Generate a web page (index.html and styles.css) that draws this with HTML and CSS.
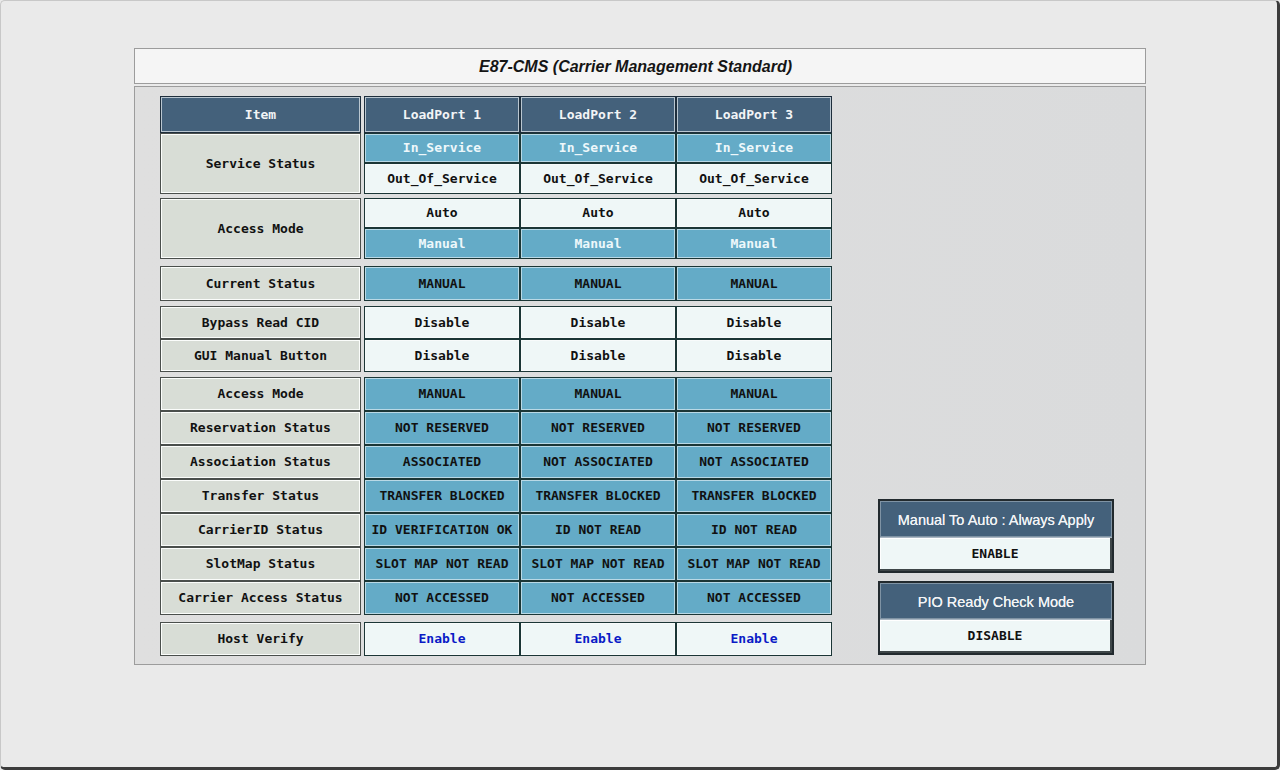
FILE: index.html
```html
<!DOCTYPE html>
<html>
<head>
<meta charset="utf-8">
<link rel="stylesheet" href="styles.css">
</head>
<body>
<div class="window">
  <div class="title">E87-CMS (Carrier Management Standard)</div>
  <div class="panel">
    <div class="table">
      <div class="grp grp-head">
        <div class="cell head item">Item</div>
        <div class="cell head">LoadPort 1</div>
        <div class="cell head">LoadPort 2</div>
        <div class="cell head">LoadPort 3</div>
      </div>
      <div class="grp grp-two g-service">
        <div class="cell label item span2">Service Status</div>
        <div class="cell blue sel">In_Service</div>
        <div class="cell blue sel">In_Service</div>
        <div class="cell blue sel">In_Service</div>
        <div class="cell light">Out_Of_Service</div>
        <div class="cell light">Out_Of_Service</div>
        <div class="cell light">Out_Of_Service</div>
      </div>
      <div class="grp grp-two g-access">
        <div class="cell label item span2">Access Mode</div>
        <div class="cell light">Auto</div>
        <div class="cell light">Auto</div>
        <div class="cell light">Auto</div>
        <div class="cell blue sel">Manual</div>
        <div class="cell blue sel">Manual</div>
        <div class="cell blue sel">Manual</div>
      </div>
      <div class="grp g-current">
        <div class="cell label item">Current Status</div>
        <div class="cell blue">MANUAL</div>
        <div class="cell blue">MANUAL</div>
        <div class="cell blue">MANUAL</div>
      </div>
      <div class="grp g-bypass">
        <div class="cell label item">Bypass Read CID</div>
        <div class="cell light">Disable</div>
        <div class="cell light">Disable</div>
        <div class="cell light">Disable</div>
        <div class="cell label item">GUI Manual Button</div>
        <div class="cell light">Disable</div>
        <div class="cell light">Disable</div>
        <div class="cell light">Disable</div>
      </div>
      <div class="grp g-status">
        <div class="cell label item">Access Mode</div>
        <div class="cell blue">MANUAL</div>
        <div class="cell blue">MANUAL</div>
        <div class="cell blue">MANUAL</div>
        <div class="cell label item">Reservation Status</div>
        <div class="cell blue">NOT RESERVED</div>
        <div class="cell blue">NOT RESERVED</div>
        <div class="cell blue">NOT RESERVED</div>
        <div class="cell label item">Association Status</div>
        <div class="cell blue">ASSOCIATED</div>
        <div class="cell blue">NOT ASSOCIATED</div>
        <div class="cell blue">NOT ASSOCIATED</div>
        <div class="cell label item">Transfer Status</div>
        <div class="cell blue">TRANSFER BLOCKED</div>
        <div class="cell blue">TRANSFER BLOCKED</div>
        <div class="cell blue">TRANSFER BLOCKED</div>
        <div class="cell label item">CarrierID Status</div>
        <div class="cell blue">ID VERIFICATION OK</div>
        <div class="cell blue">ID NOT READ</div>
        <div class="cell blue">ID NOT READ</div>
        <div class="cell label item">SlotMap Status</div>
        <div class="cell blue">SLOT MAP NOT READ</div>
        <div class="cell blue">SLOT MAP NOT READ</div>
        <div class="cell blue">SLOT MAP NOT READ</div>
        <div class="cell label item">Carrier Access Status</div>
        <div class="cell blue">NOT ACCESSED</div>
        <div class="cell blue">NOT ACCESSED</div>
        <div class="cell blue">NOT ACCESSED</div>
      </div>
      <div class="grp g-host">
        <div class="cell label item">Host Verify</div>
        <div class="cell light link">Enable</div>
        <div class="cell light link">Enable</div>
        <div class="cell light link">Enable</div>
      </div>
    </div>
    <div class="side">
      <div class="box">
        <div class="box-head">Manual To Auto : Always Apply</div>
        <div class="box-val">ENABLE</div>
      </div>
      <div class="box">
        <div class="box-head">PIO Ready Check Mode</div>
        <div class="box-val">DISABLE</div>
      </div>
    </div>
  </div>
</div>
</body>
</html>
```

FILE: styles.css
```css
html, body {
  margin: 0;
  padding: 0;
  background: #e9e9e9;
}

.window {
  width: 1280px;
  height: 770px;
  box-sizing: border-box;
  background: #eaeaea;
  border-top: 1px solid #c8c8c8;
  border-left: 1px solid #c8c8c8;
  border-right: 3px solid #3c3c3c;
  border-bottom: 3px solid #3c3c3c;
  border-radius: 5px;
  padding: 47px 0 0 133px;
  display: flex;
  flex-direction: column;
  gap: 2px;
}

.title {
  width: 1012px;
  height: 36px;
  box-sizing: border-box;
  border: 1px solid #9c9c9c;
  background: #f5f5f5;
  padding: 1px 9px 0 0;
  display: flex;
  align-items: center;
  justify-content: center;
  font-family: "Liberation Sans", Arial, sans-serif;
  font-weight: bold;
  font-style: italic;
  font-size: 16px;
  color: #151515;
}

.panel {
  width: 1012px;
  height: 579px;
  box-sizing: border-box;
  border: 1px solid #9c9c9c;
  background: linear-gradient(90deg, #dfdfdf 0%, #dadbdc 100%);
  padding: 9px 0 0 25px;
  display: flex;
}

.table {
  display: flex;
  flex-direction: column;
}

.grp {
  display: grid;
  grid-template-columns: 204px 156px 156px 156px;
}

.grp-head { grid-template-rows: 37px; }
.grp-two { grid-template-rows: 30px 31px; }
.g-service { margin-top: 0; }
.g-access { margin-top: 4px; }
.g-current { margin-top: 7px; grid-template-rows: 35px; }
.g-bypass { margin-top: 5px; grid-template-rows: 33px 33px; }
.g-status { margin-top: 5px; grid-template-rows: repeat(7, 34px); }
.g-host { margin-top: 7px; grid-template-rows: 34px; }

.cell {
  box-sizing: border-box;
  display: flex;
  align-items: center;
  justify-content: center;
  padding-bottom: 1px;
  font-family: "DejaVu Sans Mono", "Liberation Mono", monospace;
  font-weight: bold;
  font-size: 13px;
  color: #111;
  white-space: nowrap;
  border: 1px solid #1b3636;
  box-shadow: inset 0 0 0 1px rgba(255, 255, 255, 0.55);
}

.item {
  margin-right: 3px;
}

.span2 {
  grid-row: span 2;
}

.head {
  background: #44617b;
  color: #f2f4f6;
  border-color: #1e2e3c;
  box-shadow: inset 0 0 0 1px #b9c6d0;
}

.label {
  background: #d8ddd6;
  border-color: #4a4f4c;
  box-shadow: inset 0 0 0 1px #fbfdfb;
}

.light {
  background: #eff7f7;
}

.blue {
  background: #64abc7;
}

.blue.sel {
  color: #eef8fb;
}

.link {
  color: #0a1ac6;
}

.side {
  margin-left: 46px;
  display: flex;
  flex-direction: column;
  justify-content: flex-end;
  gap: 8px;
  padding-bottom: 9px;
}

.box {
  width: 236px;
  box-sizing: border-box;
  border: 2px solid #222a2e;
  display: flex;
  flex-direction: column;
}

.box-head {
  height: 37px;
  box-sizing: border-box;
  background: #44617b;
  color: #f2f4f6;
  padding-top: 2px;
  display: flex;
  align-items: center;
  justify-content: center;
  font-family: "Liberation Sans", Arial, sans-serif;
  font-size: 14.5px;
  text-shadow: 0 0 0.4px #f2f4f6;
  border-bottom: 1px solid #a9b6c2;
  box-shadow: inset 0 0 0 1px #7f93a4;
}

.box-val {
  height: 33px;
  box-sizing: border-box;
  background: #eff7f7;
  display: flex;
  align-items: center;
  justify-content: center;
  font-family: "DejaVu Sans Mono", "Liberation Mono", monospace;
  font-weight: bold;
  font-size: 13px;
  color: #111;
  border-right: 2px solid #3e4648;
  border-bottom: 2px solid #3e4648;
  box-shadow: inset 1px 1px 0 #ffffff;
}
```
